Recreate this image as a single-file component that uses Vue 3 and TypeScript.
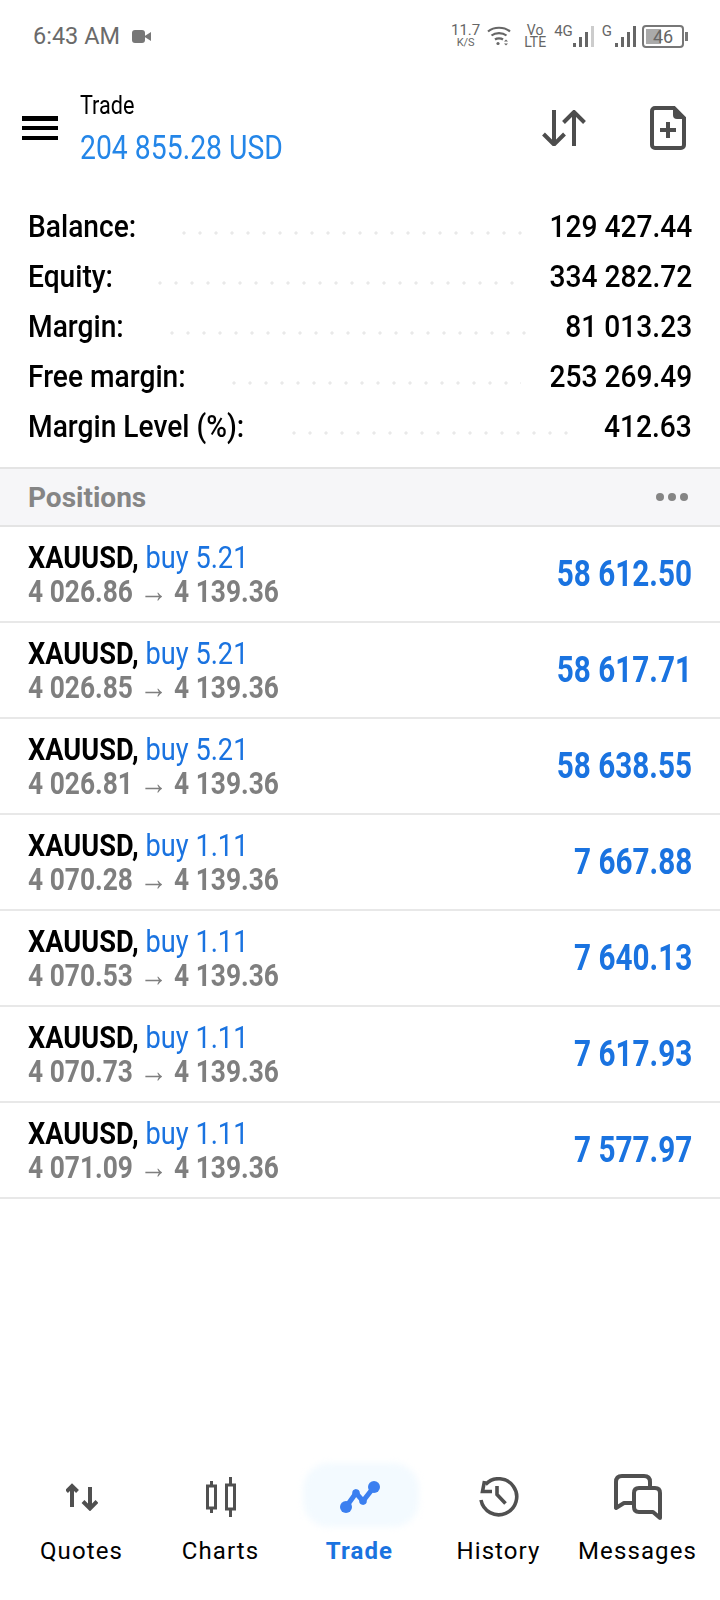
<script setup lang="ts">
interface Position {
  lots: string
  open: string
  profit: string
}

// start and width of the faint dotted leader in each row
const summary = [
  { label: "Balance:", value: "129 427.44", dotStart: 148, dotWidth: 361 },
  { label: "Equity:", value: "334 282.72", dotStart: 124, dotWidth: 373 },
  { label: "Margin:", value: "81 013.23", dotStart: 136, dotWidth: 373 },
  { label: "Free margin:", value: "253 269.49", dotStart: 198, dotWidth: 295 },
  { label: "Margin Level (%):", value: "412.63", dotStart: 258, dotWidth: 290 },
]

const positions: Position[] = [
  { lots: "5.21", open: "4 026.86", profit: "58 612.50" },
  { lots: "5.21", open: "4 026.85", profit: "58 617.71" },
  { lots: "5.21", open: "4 026.81", profit: "58 638.55" },
  { lots: "1.11", open: "4 070.28", profit: "7 667.88" },
  { lots: "1.11", open: "4 070.53", profit: "7 640.13" },
  { lots: "1.11", open: "4 070.73", profit: "7 617.93" },
  { lots: "1.11", open: "4 071.09", profit: "7 577.97" },
]
</script>

<template>
  <div class="screen">
    <div class="status-bar">
      <div class="status-left">
        <span class="clock">6:43 AM</span>
        <svg width="19" height="13" viewBox="0 0 19 13">
          <rect x="0" y="0" width="13" height="13" rx="3" fill="#777" />
          <path d="M12 6.500L19 2v9z" fill="#777" />
        </svg>
      </div>
      <div class="status-right">
        <div class="speed"><span>11.7</span><small>K/S</small></div>
        <svg class="wifi" width="24" height="20" viewBox="0 0 24 20" fill="none" stroke="#666" stroke-width="2.200">
          <path d="M1 5.500c6-5 16-5 22 0" />
          <path d="M4.500 9.500c4-3.200 11-3.200 15 0" />
          <path d="M8 13.500c2-1.400 6-1.400 8 0" />
          <circle cx="11" cy="17.500" r="1.600" fill="#666" stroke="none" />
          <path d="M17 15.500l2-2 2 2zM17 17.500l2 2 2-2z" fill="#666" stroke="none" />
        </svg>
        <div class="volte"><span>Vo</span><span>LTE</span></div>
        <div class="signal first">
          <span class="net">4G</span>
          <svg width="21" height="21" viewBox="0 0 21 21">
            <rect x="0" y="17" width="3" height="4" fill="#666" />
            <rect x="6" y="11" width="3" height="10" fill="#666" />
            <rect x="12" y="6" width="3" height="15" fill="#666" />
            <rect x="18" y="0" width="3" height="21" fill="#ccc" />
          </svg>
        </div>
        <div class="signal second">
          <span class="net">G</span>
          <svg width="21" height="21" viewBox="0 0 21 21">
            <rect x="0" y="17" width="3" height="4" fill="#666" />
            <rect x="6" y="11" width="3" height="10" fill="#666" />
            <rect x="12" y="6" width="3" height="15" fill="#666" />
            <rect x="18" y="0" width="3" height="21" fill="#666" />
          </svg>
        </div>
        <div class="battery">
          <div class="battery-body"><span class="battery-fill"></span><span class="battery-text">46</span></div>
          <span class="battery-cap"></span>
        </div>
      </div>
    </div>

    <header class="toolbar">
      <button class="menu-btn" type="button" aria-label="Menu"><i></i><i></i><i></i></button>
      <div class="title-block">
        <div class="title cond">Trade</div>
        <div class="total cond">204 855.28 USD</div>
      </div>
      <svg class="sort-icon" width="44" height="36" viewBox="0 0 44 36" fill="none" stroke="#4d4d4d" stroke-width="4">
        <path d="M12 0v34" />
        <path d="M1.500 24L12 34.500 22.500 24" />
        <path d="M32 36V2" />
        <path d="M21.500 12.500L32 2l10.500 10.500" />
      </svg>
      <svg class="doc-icon" width="36" height="44" viewBox="0 0 36 44" fill="none">
        <path d="M5 2h19l10 10v27a3 3 0 0 1-3 3H5a3 3 0 0 1-3-3V5a3 3 0 0 1 3-3z" stroke="#4d4d4d" stroke-width="4" />
        <path d="M23 2l11 11h-7a4 4 0 0 1-4-4z" fill="#4d4d4d" />
        <path d="M18 16v16M10 24h16" stroke="#4d4d4d" stroke-width="4" />
      </svg>
    </header>

    <section class="summary">
      <div v-for="row in summary" :key="row.label" class="summary-row">
        <span class="summary-label">{{ row.label }}</span>
        <span class="dots" :style="{ marginLeft: row.dotStart + 'px', width: row.dotWidth + 'px' }"></span>
        <span class="summary-value">{{ row.value }}</span>
      </div>
    </section>

    <div class="section-head">
      <span>Positions</span>
      <span class="more"><i></i><i></i><i></i></span>
    </div>

    <ul class="positions">
      <li v-for="(p, i) in positions" :key="i" class="position">
        <div class="pos-left">
          <div class="pos-top cond"><b>XAUUSD,</b> <span class="side">buy {{ p.lots }}</span></div>
          <div class="pos-bottom cond">{{ p.open }} <span class="arrow">→</span> 4 139.36</div>
        </div>
        <div class="profit cond">{{ p.profit }}</div>
      </li>
    </ul>

    <nav class="tabs">
      <div class="tab">
        <div class="tab-icon">
          <svg width="32" height="28" viewBox="0 0 32 28" fill="none" stroke="#505050" stroke-width="4">
            <path d="M6 24V3" />
            <path d="M0.500 8.500L6 3l5.500 5.500" />
            <path d="M24 4v21" />
            <path d="M17 18.500L24 25.500l7-7" />
          </svg>
        </div>
        <span>Quotes</span>
      </div>
      <div class="tab">
        <div class="tab-icon">
          <svg width="32" height="40" viewBox="0 0 32 40" fill="none" stroke="#505050" stroke-width="3">
            <rect x="2.500" y="9" width="8" height="22" />
            <path d="M6.500 4v5M6.500 31v5" />
            <rect x="21.500" y="8" width="8" height="24" />
            <path d="M25.500 0v8M25.500 32v8" />
          </svg>
        </div>
        <span>Charts</span>
      </div>
      <div class="tab active">
        <div class="tab-glow"></div>
        <div class="tab-icon">
          <svg width="40" height="32" viewBox="0 0 40 32">
            <path d="M6 26L16 12l7 8L34 6" fill="none" stroke="#3b7ff0" stroke-width="5" />
            <circle cx="6" cy="26" r="6" fill="#3b7ff0" />
            <circle cx="16" cy="12" r="3.800" fill="#3b7ff0" />
            <circle cx="23" cy="20" r="3.800" fill="#3b7ff0" />
            <circle cx="34" cy="6" r="6" fill="#3b7ff0" />
          </svg>
        </div>
        <span>Trade</span>
      </div>
      <div class="tab">
        <div class="tab-icon">
          <svg width="40" height="40" viewBox="0 0 40 40" fill="none" stroke="#505050" stroke-width="3.600">
            <path d="M6.500 7.500A18 18 0 1 1 2 23" />
            <path d="M5.500 4L3.500 14.500H13" />
            <path d="M18 9v8.500L26.500 26.500" />
          </svg>
        </div>
        <span>History</span>
      </div>
      <div class="tab">
        <div class="tab-icon">
          <svg width="48" height="46" viewBox="0 0 48 46" fill="none" stroke="#505050" stroke-width="4" stroke-linejoin="round">
            <path d="M19 29H10l-8 5V8q0-6 6-6h22q6 0 6 6v6" />
            <path d="M25 14h16q5 0 5 5v25l-7-6H25q-5 0-5-5V19q0-5 5-5z" />
          </svg>
        </div>
        <span>Messages</span>
      </div>
    </nav>
  </div>
</template>

<style>
body {
  margin: 0;
  background: #fff;
}
</style>

<style scoped>
.screen {
  width: 720px;
  height: 1600px;
  display: flex;
  flex-direction: column;
  background: #fff;
  font-family: Roboto, "Liberation Sans", sans-serif;
  color: #000;
  overflow: hidden;
}

/* Roboto squeezed to stand in for Roboto Condensed */
.cond {
  transform: scaleX(0.85);
  transform-origin: left center;
  white-space: nowrap;
}

.status-bar {
  height: 72px;
  display: flex;
  justify-content: space-between;
  align-items: center;
  padding: 0 32px 0 33px;
  color: #666;
}

.status-left {
  display: flex;
  align-items: center;
  gap: 12px;
}

.clock {
  font-size: 23.500px;
  color: #6a6a6a;
}

.status-right {
  display: flex;
  align-items: center;
}

.speed {
  width: 27px;
  display: flex;
  flex-direction: column;
  align-items: center;
  font-size: 15px;
  line-height: 13px;
}

.speed small {
  font-size: 11px;
  line-height: 11px;
}

.wifi {
  margin-left: 8px;
}

.volte {
  margin-left: 14px;
  width: 20px;
  display: flex;
  flex-direction: column;
  align-items: center;
  font-size: 14px;
  line-height: 12px;
}

.signal {
  display: flex;
  align-items: flex-end;
  height: 22px;
}

.signal.first {
  margin-left: 9px;
}

.signal.second {
  margin-left: 8px;
}

.signal.second .net {
  margin-right: 3px;
}

.net {
  font-size: 15px;
  line-height: 13px;
  align-self: flex-start;
}

.battery {
  margin-left: 6px;
  display: flex;
  align-items: center;
  gap: 1px;
}

.battery-body {
  position: relative;
  width: 38px;
  height: 19px;
  border: 2px solid #777;
  border-radius: 4px;
  display: flex;
  align-items: center;
  justify-content: center;
  font-size: 18px;
}

.battery-fill {
  position: absolute;
  left: 2px;
  top: 2px;
  bottom: 2px;
  width: 15px;
  background: #aaa;
}

.battery-text {
  position: relative;
}

.battery-cap {
  width: 3px;
  height: 9px;
  background: #777;
}

.toolbar {
  height: 110px;
  display: flex;
  align-items: center;
  padding: 0 34px 0 22px;
  margin-top: 1px;
}

.menu-btn {
  width: 36px;
  height: 24px;
  padding: 0;
  border: 0;
  background: none;
  display: flex;
  flex-direction: column;
  justify-content: space-between;
}

.menu-btn i {
  display: block;
  height: 4.500px;
  background: #000;
}

.title-block {
  flex: 1;
  margin-left: 22px;
}

.title {
  font-size: 25px;
  line-height: 30px;
  transform: scaleX(0.865);
}

.total {
  margin-top: 7px;
  font-size: 34px;
  line-height: 38px;
  color: #2486e8;
  transform: scaleX(0.834);
}

.sort-icon {
  margin-right: 64px;
}

.summary {
  padding: 18px 28px 0;
  display: flex;
  flex-direction: column;
}

.summary-row {
  height: 50px;
  display: flex;
  align-items: center;
  font-size: 32px;
  font-weight: 500;
  white-space: nowrap;
}

.summary-label {
  width: 0;
  transform: scaleX(0.88);
  transform-origin: left center;
}

.dots {
  height: 4px;
  margin-top: 14px;
  background: radial-gradient(circle, #e9e9e9 1.400px, transparent 1.800px) 0 0 / 16px 4px;
}

.summary-value {
  margin-left: auto;
  transform: scaleX(0.88);
  transform-origin: right center;
}

.section-head {
  height: 56px;
  margin-top: 16px;
  padding: 0 32px 0 28px;
  display: flex;
  align-items: center;
  justify-content: space-between;
  background: #f6f6f8;
  border-top: 2px solid #e4e4e4;
  border-bottom: 2px solid #e4e4e4;
  font-size: 28px;
  font-weight: 700;
  color: #858585;
}

.more {
  display: flex;
  gap: 4px;
}

.more i {
  width: 8px;
  height: 8px;
  border-radius: 50%;
  background: #858585;
}

.positions {
  list-style: none;
  margin: 0;
  padding: 0;
}

.position {
  height: 94px;
  padding: 0 28px;
  display: flex;
  align-items: center;
  justify-content: space-between;
  border-bottom: 2px solid #e8e8e8;
}

.pos-top {
  font-size: 32px;
  line-height: 34px;
}

.pos-top b {
  font-weight: 700;
}

.side {
  color: #1a73e0;
}

.pos-bottom {
  margin-top: 2px;
  font-size: 31px;
  line-height: 32px;
  font-weight: 700;
  color: #7f7f7f;
}

.arrow {
  font-weight: 400;
  font-size: 33px;
  line-height: 0;
}

.profit {
  font-size: 36px;
  font-weight: 700;
  color: #1a73e0;
  transform: scaleX(0.825);
  transform-origin: right center;
}

.tabs {
  margin-top: auto;
  height: 135px;
  padding: 0 13px 0 12px;
  display: flex;
}

.tab {
  position: relative;
  flex: 1 1 0;
  display: flex;
  flex-direction: column;
  align-items: center;
  font-size: 24px;
  letter-spacing: 1.100px;
  color: #000;
}

.tab-icon {
  position: relative;
  height: 64px;
  display: flex;
  align-items: center;
  justify-content: center;
}

.tab span {
  margin-top: 8px;
}

.tab.active {
  color: #1a73e0;
  font-weight: 700;
}

.tab-glow {
  position: absolute;
  top: -2px;
  left: 50%;
  width: 116px;
  height: 64px;
  margin-left: -57px;
  border-radius: 26px;
  background: #f3faff;
  filter: blur(3px);
}
</style>
